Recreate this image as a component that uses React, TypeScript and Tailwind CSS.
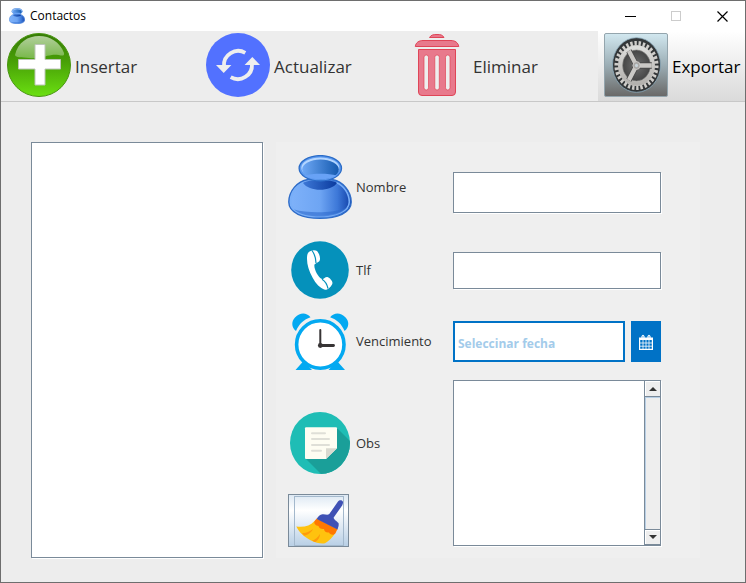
import type { ReactNode } from "react";

const field =
  "block w-full border border-[#7a8a99] bg-white px-1 text-sm text-[#333] shadow-[1px_1px_0_#fff] outline-none";

function PersonIcon({ size, id }: { size: number; id: string }) {
  return (
    <svg width={size} height={size} viewBox="0 0 64 64" className="shrink-0" aria-hidden="true">
      <defs>
        <linearGradient id={`${id}-body`}>
          <stop offset="0" stopColor="#7fb2fa" />
          <stop offset="0.5" stopColor="#6ea5f3" />
          <stop offset="0.78" stopColor="#3d78d8" />
          <stop offset="1" stopColor="#1140a8" />
        </linearGradient>
        <linearGradient id={`${id}-head`}>
          <stop offset="0" stopColor="#6ea8f5" />
          <stop offset="1" stopColor="#155aaf" />
        </linearGradient>
        <linearGradient id={`${id}-neck`}>
          <stop offset="0" stopColor="#3d78d6" />
          <stop offset="1" stopColor="#0a3a9e" />
        </linearGradient>
      </defs>
      <path d="M20 24.500C9 26.500 .8 36 .8 47C.8 58 15 63.300 32 63.300S63.200 58 63.200 47C63.200 36 55 26.500 44 24.500Z" fill={`url(#${id}-body)`} stroke="#2e6cc8" strokeWidth="1.400" />
      <path d="M16 27.500C8 30.500 2.700 38.500 2.700 47C2.700 56.500 16 61.200 32 61.200S61.300 56.500 61.300 47C61.300 38.500 56 30.500 48 27.500" fill="none" stroke="#79aff8" strokeWidth="1.600" />
      <path d="M6 54.500C20 58.500 45 58.500 59 52.500C54 59 43 61.500 32 61.500C21 61.500 11 59 6 54.500Z" fill="#2e6bcd" opacity=".6" />
      <path d="M15 28C20 24 44 24 49 28C43 37 21 37 15 28Z" fill={`url(#${id}-neck)`} />
      <ellipse cx="32.300" cy="13.300" rx="21.200" ry="12.700" fill="#5c9af0" stroke="#2b6cc7" strokeWidth="1.300" />
      <ellipse cx="32.300" cy="12.800" rx="19" ry="10.300" fill="#b4d6ff" />
      <ellipse cx="32.500" cy="14.500" rx="18.300" ry="10" fill={`url(#${id}-head)`} />
      <path d="M16.500 20.500C24 18 41 18 48.500 20.500C43 25.500 22 25.500 16.500 20.500Z" fill="#68a2f6" />
    </svg>
  );
}

function AddIcon() {
  return (
    <svg width="64" height="64" viewBox="0 0 64 64" aria-hidden="true">
      <defs>
        <linearGradient id="add-base" x2="0" y2="1">
          <stop offset="0" stopColor="#357a05" />
          <stop offset="0.45" stopColor="#48a007" />
          <stop offset="1" stopColor="#6be011" />
        </linearGradient>
        <linearGradient id="add-shine" x2="0" y2="1">
          <stop offset="0" stopColor="#b2cf9c" />
          <stop offset="1" stopColor="#79b84b" />
        </linearGradient>
      </defs>
      <circle cx="32" cy="32" r="31.500" fill="url(#add-base)" stroke="#48960f" />
      <path d="M8 22C11 9 21 3 32 3S53 9 57 20C58 25 52 21 45 22C37 23 33 26 22 25C14 24 9 25 8 22Z" fill="url(#add-shine)" />
      <path d="M28 11.500H38V26.500H53.500V36H38V52H28V36H11.500V26.500H28Z" fill="#fff" stroke="#bcc5b8" />
    </svg>
  );
}

function RefreshIcon() {
  return (
    <svg width="64" height="64" viewBox="0 0 64 64" aria-hidden="true">
      <circle cx="32" cy="32" r="32" fill="#5271ff" />
      <g fill="none" stroke="#eee" strokeWidth="3.800">
        <path d="M18 33A14.200 14.200 0 0 1 39.300 19.800" />
        <path d="M46 31A14.200 14.200 0 0 1 24.700 44.200" />
      </g>
      <path d="M10 32H25.400L17.700 40ZM54 32H38.600L46.300 24Z" fill="#eee" />
    </svg>
  );
}

function TrashIcon() {
  return (
    <svg width="64" height="64" viewBox="0 0 64 64" aria-hidden="true">
      <g fill="#e8798c" stroke="#df4557" strokeWidth="1">
        <path d="M24.500 4.500C26 2 28 1.500 32 1.500S37.500 2 39 4.500Z" />
        <path d="M10.300 13.500C10.800 9.500 14 7.500 18 7.500H46C50 7.500 53 9.500 53.800 13.500Z" />
        <path d="M13.500 16.500H50.500V59Q50.500 62.500 47 62.500H17Q13.500 62.500 13.500 59Z" />
      </g>
      <g fill="#eee" stroke="#df4557" strokeWidth=".7">
        <rect x="19" y="22" width="4.500" height="35" rx="2.200" />
        <rect x="29.800" y="22" width="4.500" height="35" rx="2.200" />
        <rect x="40.500" y="22" width="4.500" height="35" rx="2.200" />
      </g>
    </svg>
  );
}

function GearIcon() {
  return (
    <svg width="64" height="64" viewBox="0 0 64 64" aria-hidden="true">
      <defs>
        <linearGradient id="gear-plate" x2="0" y2="1">
          <stop offset="0" stopColor="#d2e8f0" />
          <stop offset="0.5" stopColor="#9caeb5" />
          <stop offset="1" stopColor="#696867" />
        </linearGradient>
        <linearGradient id="gear-metal" x2="0" y2="1">
          <stop offset="0" stopColor="#dcdcda" />
          <stop offset="1" stopColor="#b3b1ae" />
        </linearGradient>
        <radialGradient id="gear-well">
          <stop offset="0" stopColor="#6e6e6e" />
          <stop offset="1" stopColor="#444" />
        </radialGradient>
      </defs>
      <rect x=".5" y=".5" width="63" height="63" rx="1.500" fill="url(#gear-plate)" stroke="#94a5ad" />
      <ellipse cx="32.500" cy="32" rx="24" ry="27.300" fill="#333638" stroke="#8eacbd" strokeWidth=".8" />
      <g transform="translate(32.500 32.500) scale(.9 1)" fill="none">
        <circle r="16" fill="url(#gear-well)" />
        <circle r="22" stroke="#cfcdca" strokeWidth="5" pathLength="120" strokeDasharray="2.300 1.700" />
        <circle r="18" stroke="#c4c2bf" strokeWidth="5" />
        <circle r="18" stroke="url(#gear-metal)" strokeWidth="4" />
        <circle r="15.500" stroke="#8c8c8a" strokeWidth=".6" />
        <path d="M0 0H17M0 0L-8.500 -14.700M0 0L-8.500 14.700" stroke="#4a4a4a" strokeWidth="6.400" />
        <path d="M0 0H17M0 0L-8.500 -14.700M0 0L-8.500 14.700" stroke="#cac8c5" strokeWidth="4.600" />
        <circle r="4" fill="#aaa8a6" stroke="#d2d0ce" strokeWidth=".8" />
        <circle r="1.700" fill="#c9d4da" />
      </g>
    </svg>
  );
}

function PhoneIcon() {
  return (
    <svg width="58" height="58" viewBox="0 0 58 58" aria-hidden="true">
      <circle cx="29" cy="29" r="28.800" fill="#0591bb" />
      <path d="M17 12C19 9 24 8.500 26 10C28 12 30 17 28.500 20C27 22 25 21.500 23.500 23.500C22.500 27 27 36.500 31 38C33 38.500 34 35.500 36.500 36C39 37 41.500 40 41.500 42C41 45 37 49 34 48.800C29 47 25 43 21.500 36.500C18 30 16 24 16 18C16 15 16.300 13 17 12Z" fill="#fff" />
      <path d="M21 9.500C23.500 13 25 17 25 22M31 38.200C34 40 36 43 37 47.500" fill="none" stroke="#0591bb" strokeWidth="1.200" />
    </svg>
  );
}

function ClockIcon() {
  return (
    <svg width="64" height="58" viewBox="0 0 64 58" aria-hidden="true">
      <g fill="#03a9f1">
        <path d="M8 19C3 15 3.500 9 7 5.500C12 .5 18 0 22.500 5.300C16 7.500 11 12 8 19Z" />
        <path d="M56.600 19C61.600 15 61.100 9 57.600 5.500C52.600 .5 46.600 0 42.100 5.300C48.600 7.500 53.600 12 56.600 19Z" />
        <path d="M7.500 58L15.500 49L24 58ZM57 58L49 49L40.500 58Z" />
      </g>
      <circle cx="32.300" cy="32.500" r="23.700" fill="#fff" stroke="#03a9f1" strokeWidth="3.600" />
      <path d="M32.300 18V33.500" stroke="#373435" strokeWidth="2" strokeLinecap="round" />
      <path d="M33 33.500H45.500" stroke="#373435" strokeWidth="2.800" strokeLinecap="round" />
      <circle cx="32.300" cy="33.500" r="2.400" fill="#373435" />
    </svg>
  );
}

function NoteIcon() {
  return (
    <svg width="60" height="62" viewBox="0 0 60 62" aria-hidden="true">
      <defs>
        <clipPath id="note-disc">
          <ellipse cx="30" cy="31" rx="30" ry="31" />
        </clipPath>
      </defs>
      <g clipPath="url(#note-disc)">
        <path d="M0 0H60V62H0Z" fill="#1fbdb5" />
        <path d="M47 16L62 31V64H33L16 47Z" fill="#1a9f99" />
        <path d="M16 15.300H46Q47 15.300 47 16.300V36.300L36 47H16Q15 47 15 46V16.300Q15 15.300 16 15.300Z" fill="#fefdf2" />
        <path d="M36 36.300H47L36 47Z" fill="#dadad0" />
        <path d="M22 21.300H35M22 27H39M22 33H39M22 38.700H31" stroke="#dfdfd7" strokeWidth="2" strokeLinecap="round" />
      </g>
    </svg>
  );
}

function BroomIcon() {
  return (
    <svg width="48" height="48" viewBox="0 0 48 48" aria-hidden="true">
      <path d="M19.300 24.300C15 29 9 30.500 1.300 29.500C4 35 9 40 16 43.500C21 46 26 47 30 46.300C34 44 38 40 40.500 35.500Z" fill="#ffc20e" />
      <path d="M7 36C11 36.500 15 34 18 32C16 36 12 38.500 9 38.500ZM17 43.800C20 43 23 40 25 37C25 41 22 44.500 20 45Z" fill="#ff9a0a" />
      <path d="M21.700 21.500L42.500 32L40.300 36.500C38 39 35 37.500 34 35.500C31 36 29 34 29 32C26 32.500 24 31 23.500 29C21 29 19 27 19.300 24.300Z" fill="#ff7800" />
      <path d="M43 4.500C44.500 2.500 48.500 3 48 6L47.300 8.300L38.700 20.500C38.500 22.500 42 24 43.500 26C44 28 43.500 30 42.500 32.500L21.700 22C23 19.500 25 17.500 27.500 17.300C30 17 32.500 18.500 34.300 17Z" fill="#3f51b5" />
    </svg>
  );
}

function CalendarIcon() {
  return (
    <svg width="14" height="16" viewBox="0 0 14 16" fill="none" stroke="#fff" aria-hidden="true">
      <path d="M.6 4H13.400V15.400H.6Z" strokeWidth="1.200" />
      <path d="M1 5H13" strokeWidth="2" />
      <path d="M1 9H13M1 12.200H13M4 6V15M7 6V15M10 6V15" strokeWidth=".8" />
      <path d="M3 4V2.500Q4 0 5 2.500V4M9 4V2.500Q10 0 11 2.500V4" strokeWidth="1.200" />
    </svg>
  );
}

function ToolButton({ icon, label, active = false }: { icon: ReactNode; label: string; active?: boolean }) {
  return (
    <button
      type="button"
      className={`flex h-[70px] items-center gap-1 pb-0.5 pl-1.5 text-left ${
        active ? "bg-linear-to-b from-white to-[#dadada] text-black" : "text-[#333]"
      }`}
    >
      <span className="shrink-0">{icon}</span>
      <span className="pt-1 text-[17px]">{label}</span>
    </button>
  );
}

function FieldLabel({ icon, text, target }: { icon: ReactNode; text: string; target: string }) {
  return (
    <label htmlFor={target} className="flex items-center gap-1">
      <span className="flex w-16 shrink-0 justify-center">{icon}</span>
      <span className="pt-0.5">{text}</span>
    </label>
  );
}

function ScrollBar() {
  return (
    <div className="flex w-4 shrink-0 flex-col border-l border-[#7a8a99] bg-[#eee]">
      <button type="button" aria-label="Subir" className="flex h-4 items-center justify-center border-b border-[#7a8a99] shadow-[inset_1px_1px_0_#fff]">
        <svg width="8" height="4" viewBox="0 0 8 4" aria-hidden="true">
          <path d="M0 4L4 0L8 4Z" fill="#333" />
        </svg>
      </button>
      <div className="flex-1 border-l border-t border-[#b8cfe5]" />
      <button type="button" aria-label="Bajar" className="flex h-4 items-center justify-center border-y border-[#7a8a99] shadow-[inset_1px_1px_0_#fff]">
        <svg width="8" height="4" viewBox="0 0 8 4" aria-hidden="true">
          <path d="M0 0L4 4L8 0Z" fill="#333" />
        </svg>
      </button>
    </div>
  );
}

export default function App() {
  return (
    <div className="flex min-h-screen flex-col border border-[#6e6e6e] bg-[#ededed] font-['Open_Sans',sans-serif] text-[#333]">
      <header className="flex h-[30px] items-center bg-white pl-2 text-black">
        <PersonIcon size={16} id="title" />
        <h1 className="flex-1 pl-[5px] text-xs">Contactos</h1>
        <button type="button" aria-label="Minimizar" className="flex h-full w-[46px] items-center justify-center">
          <svg width="11" height="11" viewBox="0 0 11 11" aria-hidden="true">
            <path d="M0 5.500H11" stroke="#000" />
          </svg>
        </button>
        <button type="button" aria-label="Maximizar" disabled className="flex h-full w-[46px] items-center justify-center">
          <svg width="10" height="10" viewBox="0 0 10 10" aria-hidden="true">
            <rect x=".5" y=".5" width="9" height="9" fill="none" stroke="#ccc" />
          </svg>
        </button>
        <button type="button" aria-label="Cerrar" className="flex h-full w-[46px] items-center justify-center">
          <svg width="11" height="11" viewBox="0 0 11 11" aria-hidden="true">
            <path d="M.5 .5L10.500 10.500M10.500 .5L.5 10.500" stroke="#000" strokeWidth="1.200" />
          </svg>
        </button>
      </header>

      <nav className="grid grid-cols-[1fr_1fr_1fr_147px] border-b border-[#c8c8c8]">
        <ToolButton icon={<AddIcon />} label="Insertar" />
        <ToolButton icon={<RefreshIcon />} label="Actualizar" />
        <ToolButton icon={<TrashIcon />} label="Eliminar" />
        <ToolButton icon={<GearIcon />} label="Exportar" active />
      </nav>

      <main className="flex flex-1 gap-[13px] pt-10 pr-[45px] pb-6 pl-[30px]">
        <select size={8} aria-label="Contactos" className="w-[232px] border border-[#7a8a99] bg-white shadow-[1px_1px_0_#fff] outline-none" />

        <form className="flex flex-1 bg-[#efefef] pr-[39px] pl-3 text-[13px]">
          <div className="flex w-[165px] shrink-0 flex-col pt-[13px]">
            <FieldLabel icon={<PersonIcon size={64} id="nombre" />} text="Nombre" target="nombre" />
            <div className="pt-[22px]">
              <FieldLabel icon={<PhoneIcon />} text="Tlf" target="tlf" />
            </div>
            <div className="pt-[13px]">
              <FieldLabel icon={<ClockIcon />} text="Vencimiento" target="vencimiento" />
            </div>
            <div className="pt-[42px]">
              <FieldLabel icon={<NoteIcon />} text="Obs" target="obs" />
            </div>
            <div className="pt-5">
              <button
                type="button"
                aria-label="Limpiar"
                className="flex h-[53px] w-[61px] items-center justify-center border border-[#7a8a99] bg-linear-to-b from-[#dde8f3] via-white via-30% to-[#b8cfe5]"
              >
                <span className="border border-[#a3b8cc]">
                  <BroomIcon />
                </span>
              </button>
            </div>
          </div>

          <div className="flex min-w-0 flex-1 flex-col pt-[30px]">
            <input id="nombre" type="text" className={`${field} h-[41px]`} />
            <div className="pt-[39px]">
              <input id="tlf" type="text" className={`${field} h-[37px]`} />
            </div>
            <div className="flex gap-1.5 pt-8">
              <input
                id="vencimiento"
                type="text"
                placeholder="Seleccinar fecha"
                className="h-[41px] min-w-0 flex-1 border-2 border-[#0072c6] bg-white px-[3px] pt-[3px] text-xs font-bold outline-none placeholder:text-[#a3cbea]"
              />
              <button type="button" aria-label="Abrir calendario" className="flex w-[30px] items-center justify-center bg-[#0072c6]">
                <CalendarIcon />
              </button>
            </div>
            <div className="pt-[18px]">
              <div className="flex h-[166px] border border-[#7a8a99] bg-white shadow-[1px_1px_0_#fff]">
                <textarea id="obs" className="min-w-0 flex-1 resize-none overflow-hidden p-1 outline-none" />
                <ScrollBar />
              </div>
            </div>
          </div>
        </form>
      </main>
    </div>
  );
}
